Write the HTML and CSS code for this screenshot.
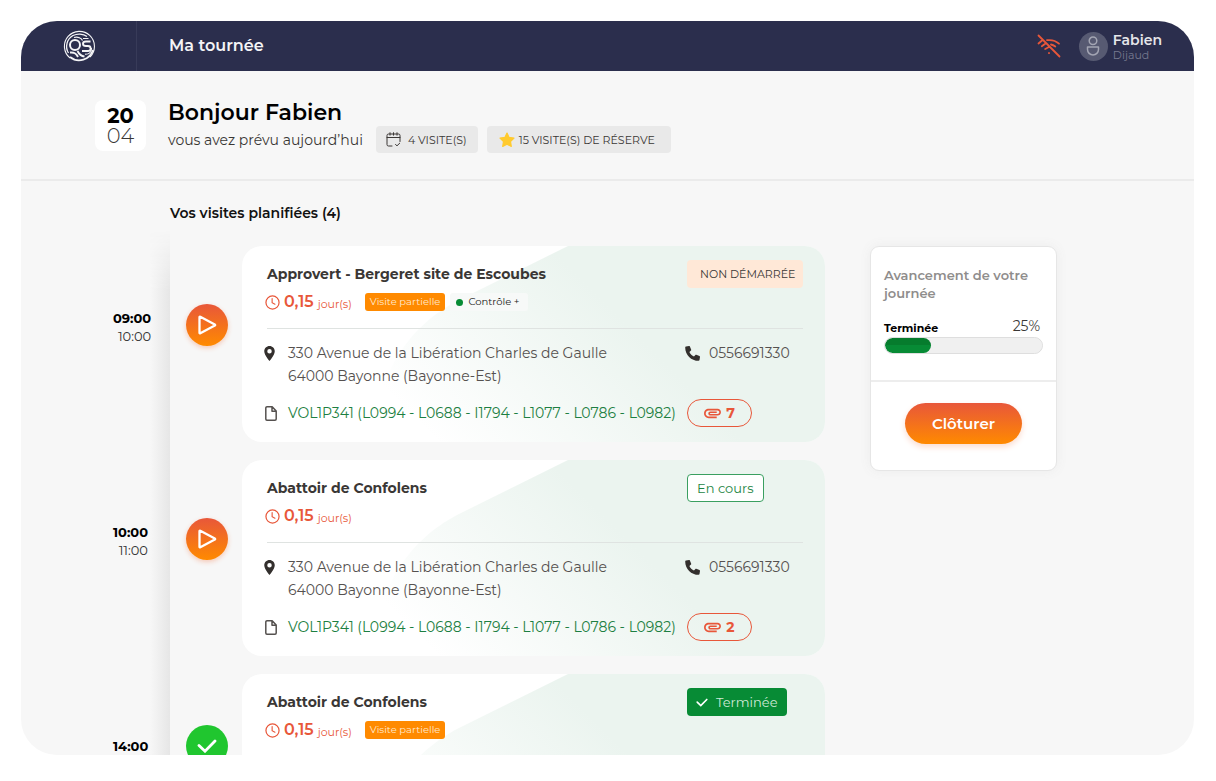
FILE: index.html
```html
<!DOCTYPE html>
<html lang="fr">
<head>
<meta charset="utf-8">
<meta name="viewport" content="width=device-width, initial-scale=1">
<title>Ma tournée</title>
<link rel="stylesheet" href="styles.css">
</head>
<body>
<svg class="sprite" aria-hidden="true">
  <symbol id="i-clock" viewBox="0 0 16 16"><circle cx="8" cy="8" r="7" fill="none" stroke="currentColor" stroke-width="1.3"/><path d="M7.6 3.8v4.4l3 1.6" fill="none" stroke="currentColor" stroke-width="1.2" stroke-linecap="round"/></symbol>
  <symbol id="i-pin" viewBox="5 2 14 20"><path fill="currentColor" d="M12 2C8.13 2 5 5.13 5 9c0 5.25 7 13 7 13s7-7.75 7-13c0-3.87-3.13-7-7-7zm0 10a3 3 0 1 1 0-6 3 3 0 0 1 0 6z"/></symbol>
  <symbol id="i-phone" viewBox="0 0 15 15"><path fill="currentColor" d="M1 .5L4 0c.4 0 .7.100.9.500l1.300 3.200c.100.300 0 .700-.2.900L4.400 6c.9 1.900 2.600 3.700 4.600 4.600l1.400-1.600c.2-.300.600-.300.900-.2l3.200 1.300c.400.200.500.500.5.900l-.5 3c-.1.500-.4.800-.9.800C6.300 14.800.2 9 .2 1.400c0-.5.300-.8.800-.9z"/></symbol>
  <symbol id="i-file" viewBox="0 0 12 15"><path d="M2 .8h5.200l4 4.200v8a1.200 1.200 0 0 1-1.200 1.200H2A1.200 1.200 0 0 1 .8 13V2A1.200 1.200 0 0 1 2 .8zM7 1v4.200h4" fill="none" stroke="currentColor" stroke-width="1.5" stroke-linejoin="round"/></symbol>
  <symbol id="i-clip" viewBox="2 6 20 13"><path fill="currentColor" d="M2 12.500C2 9.460 4.460 7 7.500 7H18c2.210 0 4 1.790 4 4s-1.790 4-4 4H9.500C8.120 15 7 13.880 7 12.500S8.120 10 9.500 10H17v2H9.410c-.55 0-.55 1 0 1H18c1.100 0 2-.9 2-2s-.9-2-2-2H7.500C5.570 9 4 10.570 4 12.500S5.570 16 7.500 16H17v2H7.500C4.460 18 2 15.540 2 12.500z"/></symbol>
  <symbol id="i-play" viewBox="0 0 20 20"><path d="M2.500 2.200v15.600c0 .5.400.7.800.5l14.500-7.700c.5-.3.500-.9 0-1.200L3.300 1.700c-.4-.2-.8 0-.8.5z" fill="none" stroke="currentColor" stroke-width="2.300" stroke-linejoin="round"/></symbol>
  <symbol id="i-check" viewBox="0 0 20 14"><path d="M2 6.500l6 5.700L18 2" fill="none" stroke="currentColor" stroke-width="2.800" stroke-linecap="round"/></symbol>
  <symbol id="i-shape" viewBox="0 0 583 196" preserveAspectRatio="xMinYMin slice"><path fill="url(#g-shape)" d="M326 0L217 54C176 75 136 116 130 196H583V0z"/></symbol>
  <defs>
    <linearGradient id="g-shape" gradientUnits="userSpaceOnUse" x1="200" y1="200" x2="380" y2="20"><stop offset="0" stop-color="#ebf4ef" stop-opacity="0"/><stop offset=".85" stop-color="#ebf4ef"/></linearGradient>
  </defs>
</svg>

<div class="app">
  <header class="topbar">
    <a class="logo" href="#" aria-label="Accueil">
      <svg width="32" height="32" viewBox="0 0 32 32" fill="none" stroke="currentColor">
        <path d="M7 28A15 15 0 1 1 27 27" stroke-width="1.100"/>
        <path d="M7 27A14.500 14.500 0 0 0 30 20" stroke-width="1.800"/>
        <path d="M5.500 23A12.500 12.500 0 0 1 10 5.500C14 3.500 20 3.300 24 6.500" stroke-width="1.300"/>
        <circle cx="12" cy="15" r="5" stroke-width="2"/>
        <path d="M11 7.500c4-1 7.500.6 8.500 3" stroke-width="1.200"/>
        <path d="M7 22.500c5-.5 6.500 1.500 8 4.500M14.500 21c1.500 3 3 5 7 5.500" stroke-width="1.900"/>
        <path d="M27.500 11.500h-4.500c-4 0-4 4.500 0 4.500h2c3.500 0 3.500 5 0 5h-6" stroke-width="1.900"/>
        <path d="M20 8.500h5.500M22 24.200c4 .3 6.500-1.700 6.500-6.200" stroke-width="1.200"/>
      </svg>
    </a>
    <h1 class="topbar-title">Ma tournée</h1>
    <svg class="offline" width="24" height="24" viewBox="0 0 24 24" fill="none" stroke="currentColor" stroke-width="1.800" stroke-linecap="round" role="img" aria-label="Hors ligne">
      <path d="M1.500 1.500l21 21M1.500 9.500L5 6.500M10 6.200c4.500-.6 9 .7 12 3.500M4.800 12.200L8.500 9.500M14 10.500c1.600.3 3 1 4.300 2M8.200 15l3.300-1.800M12 19v.2"/>
    </svg>
    <div class="user">
      <span class="avatar">
        <svg width="14" height="20" viewBox="0 0 14 20" fill="none" stroke="currentColor" stroke-width="1.500"><circle cx="7" cy="4.800" r="3.800"/><path d="M1.500 11h11v2.500a5.500 5.500 0 0 1-11 0z" stroke-linejoin="round"/></svg>
      </span>
      <span class="user-name"><strong>Fabien</strong><span>Dijaud</span></span>
    </div>
  </header>

  <section class="welcome">
    <time class="date" datetime="04-20"><strong>20</strong><span>04</span></time>
    <div>
      <h2 class="hello">Bonjour Fabien</h2>
      <div class="summary">
        <p>vous avez prévu aujourd’hui</p>
        <span class="chip">
          <svg width="15" height="15" viewBox="0 0 15 15" fill="none" stroke="currentColor" stroke-linecap="round"><path d="M6 14H2.500A1.500 1.500 0 0 1 1 12.500v-9A1.500 1.500 0 0 1 2.500 2h10A1.500 1.500 0 0 1 14 3.500v6M1 5.500h13M4 .7v2.500M7.500.7v2.500M11 .7v2.500M9.500 12.500l1.500 1.300 2.700-2.600"/></svg>
          4 VISITE(S)
        </span>
        <span class="chip chip-star">
          <svg width="16" height="16" viewBox="0 0 16 16"><path fill="#ffca2e" stroke="#ffca2e" stroke-width="1.200" stroke-linejoin="round" d="M8 1l2.100 4.400 4.900.7-3.500 3.400.8 4.900L8 12.100l-4.300 2.300.8-4.900L1 6.100l4.900-.7z"/></svg>
          15 VISITE(S) DE RÉSERVE
        </span>
      </div>
    </div>
  </section>

  <main class="content">
    <h2 class="section-title">Vos visites planifiées (4)</h2>
    <div class="columns">
      <ol class="visits">
        <li class="visit">
          <div class="hours"><strong>09:00</strong><span>10:00</span></div>
          <button class="round" type="button" aria-label="Démarrer"><svg width="20" height="20"><use href="#i-play"/></svg></button>
          <article class="card">
            <svg class="card-shape" aria-hidden="true"><use href="#i-shape"/></svg>
            <div class="card-head">
              <div>
                <h3>Approvert - Bergeret site de Escoubes</h3>
                <div class="meta"><svg width="15" height="15"><use href="#i-clock"/></svg><strong>0,15</strong><span class="unit">jour(s)</span><span class="tag">Visite partielle</span><span class="tag tag-control">Contrôle +</span></div>
              </div>
              <div class="side"><span class="status status-new">NON DÉMARRÉE</span></div>
            </div>
            <div class="card-body">
              <svg class="pin" width="11" height="15"><use href="#i-pin"/></svg>
              <address>330 Avenue de la Libération Charles de Gaulle<br>64000 Bayonne (Bayonne-Est)</address>
              <a class="phone" href="tel:0556691330"><svg width="15" height="15"><use href="#i-phone"/></svg>0556691330</a>
              <svg class="file" width="12" height="15"><use href="#i-file"/></svg>
              <a class="codes" href="#">VOL1P341 (L0994 - L0688 - I1794 - L1077 - L0786 - L0982)</a>
              <button class="clip" type="button" aria-label="7 pièces jointes"><svg width="17" height="11"><use href="#i-clip"/></svg>7</button>
            </div>
          </article>
        </li>
        <li class="visit">
          <div class="hours"><strong>10:00</strong><span>11:00</span></div>
          <button class="round" type="button" aria-label="Démarrer"><svg width="20" height="20"><use href="#i-play"/></svg></button>
          <article class="card">
            <svg class="card-shape" aria-hidden="true"><use href="#i-shape"/></svg>
            <div class="card-head">
              <div>
                <h3>Abattoir de Confolens</h3>
                <div class="meta"><svg width="15" height="15"><use href="#i-clock"/></svg><strong>0,15</strong><span class="unit">jour(s)</span></div>
              </div>
              <div class="side"><span class="status status-open">En cours</span></div>
            </div>
            <div class="card-body">
              <svg class="pin" width="11" height="15"><use href="#i-pin"/></svg>
              <address>330 Avenue de la Libération Charles de Gaulle<br>64000 Bayonne (Bayonne-Est)</address>
              <a class="phone" href="tel:0556691330"><svg width="15" height="15"><use href="#i-phone"/></svg>0556691330</a>
              <svg class="file" width="12" height="15"><use href="#i-file"/></svg>
              <a class="codes" href="#">VOL1P341 (L0994 - L0688 - I1794 - L1077 - L0786 - L0982)</a>
              <button class="clip" type="button" aria-label="2 pièces jointes"><svg width="17" height="11"><use href="#i-clip"/></svg>2</button>
            </div>
          </article>
        </li>
        <li class="visit">
          <div class="hours"><strong>14:00</strong></div>
          <button class="round round-done" type="button" aria-label="Visite terminée"><svg width="20" height="14"><use href="#i-check"/></svg></button>
          <article class="card">
            <svg class="card-shape" aria-hidden="true"><use href="#i-shape"/></svg>
            <div class="card-head">
              <div>
                <h3>Abattoir de Confolens</h3>
                <div class="meta"><svg width="15" height="15"><use href="#i-clock"/></svg><strong>0,15</strong><span class="unit">jour(s)</span><span class="tag">Visite partielle</span></div>
              </div>
              <div class="side"><span class="status status-done"><svg width="12" height="9"><use href="#i-check"/></svg>Terminée</span></div>
            </div>
          </article>
        </li>
      </ol>

      <aside class="progress-card">
        <div class="progress-part">
          <h2>Avancement de votre journée</h2>
          <div class="progress-label"><label for="done">Terminée</label><span>25%</span></div>
          <progress id="done" value="29" max="100"></progress>
        </div>
        <div class="close-part"><button class="close-day" type="button">Clôturer</button></div>
      </aside>
    </div>
  </main>
</div>
</body>
</html>
```
FILE: styles.css
```css
* { box-sizing: border-box; }

body {
  margin: 0;
  padding: 21px 22px 26px 21px;
  background: #fff;
  color: #3a3735;
  font: 14px/18px Montserrat, Inter, sans-serif;
}

h1, h2, h3, p, ol { margin: 0; padding: 0; }
ol { list-style: none; }
button { font: inherit; border: 0; padding: 0; cursor: pointer; }
a { color: inherit; text-decoration: none; }
svg { display: block; flex: none; }
.sprite { position: absolute; width: 0; height: 0; }

.app {
  height: calc(100vh - 47px);
  overflow: hidden;
  border-radius: 36px;
  background: #f7f7f7;
}

/* Top bar */
.topbar {
  display: flex;
  align-items: center;
  height: 50px;
  padding-right: 32px;
  background: #2b2e4d;
  color: #f4f4f6;
}
.logo {
  display: flex;
  align-items: center;
  justify-content: center;
  width: 116px;
  height: 100%;
  border-right: 1px solid #383b59;
}
.topbar-title { flex: 1; padding-left: 32px; font-size: 16px; font-weight: 600; }
.offline { margin-right: 18px; color: #e8573a; }
.user { display: flex; align-items: center; gap: 5px; }
.avatar {
  display: grid;
  place-items: center;
  width: 29px;
  height: 29px;
  border-radius: 50%;
  background: #575a72;
  color: #a3a5b3;
}
.user-name { display: flex; flex-direction: column; padding-top: 3px; font-size: 11px; line-height: 15px; color: #777a90; }
.user-name strong { font-size: 14px; font-weight: 600; color: #e6e6ea; }

/* Greeting */
.welcome {
  display: flex;
  gap: 22px;
  padding: 29px 74px 26px;
  border-bottom: 2px solid #ebebeb;
}
.date {
  display: flex;
  flex-direction: column;
  align-items: center;
  width: 51px;
  height: 51px;
  padding-top: 6px;
  border-radius: 8px;
  background: #fff;
  font-size: 21px;
  line-height: 20px;
}
.date strong { color: #000; font-weight: 700; }
.date span { font-weight: 300; }
.hello { font-size: 22px; line-height: 26px; font-weight: 600; color: #000; }
.summary { display: flex; align-items: center; }
.chip {
  display: flex;
  align-items: center;
  gap: 7px;
  height: 27px;
  margin-left: 13px;
  padding: 0 11px 0 10px;
  border-radius: 4px;
  background: #e9e9e9;
  font-size: 11px;
}
.chip-star { gap: 4px; margin-left: 9px; padding: 0 16px 0 12px; }

/* Visits */
.content { padding-top: 22px; }
.section-title { padding-left: 149px; font-size: 14px; line-height: 20px; font-weight: 600; color: #111; }
.columns {
  display: grid;
  grid-template-columns: minmax(0, 804px) 187px;
  align-items: start;
  gap: 45px;
  margin-top: 23px;
}
.visits { position: relative; display: grid; gap: 18px; }
.visits::before {
  content: "";
  position: absolute;
  top: -16px;
  bottom: 0;
  left: 129px;
  width: 20px;
  background: linear-gradient(to right, #f7f7f7, #e6e6e6);
  -webkit-mask-image: linear-gradient(transparent, #000 60px);
  mask-image: linear-gradient(transparent, #000 60px);
}
.visit { display: grid; grid-template-columns: 59px 42px minmax(0, 1fr); column-gap: 14px; padding-left: 92px; }
.hours {
  position: relative;
  display: flex;
  flex-direction: column;
  justify-self: start;
  padding-top: 63px;
  text-align: right;
  font-size: 13px;
  color: #000;
}
.hours span { font-weight: 400; color: #333; }
.round {
  display: grid;
  place-items: center;
  width: 42px;
  height: 42px;
  margin-top: 58px;
  border-radius: 50%;
  background: linear-gradient(#e8573a, #ff8a00);
  box-shadow: 0 2px 5px #f5c9b8;
  color: #fff;
}
.round-done { margin-top: 51px; background: #20c62f; box-shadow: none; }

.card {
  position: relative;
  height: max-content;
  min-height: 196px;
  padding: 14px 22px 14px 25px;
  border-radius: 20px;
  overflow: hidden;
  background: #fff;
}
.card > * { position: relative; }
.card .card-shape { position: absolute; inset: 0; width: 100%; height: 100%; }
.card-head {
  display: grid;
  grid-template-columns: minmax(0, 1fr) 116px;
  height: 69px;
  border-bottom: 1px solid #dfe3e1;
}
.card h3 { padding-top: 5px; font-size: 14px; font-weight: 700; }
.meta { display: flex; align-items: center; height: 20px; margin: 9px 0 0 -2px; color: #e8573a; }
.meta strong { margin: 0 4px; font-size: 16px; font-weight: 600; }
.unit { margin-right: 13px; padding-top: 3px; font-size: 11px; }
.tag {
  height: 18px;
  padding: 0 5px;
  border-radius: 3px;
  background: #ff8a00;
  color: #ffe9cf;
  font-size: 10px;
}
.tag-control {
  display: flex;
  align-items: center;
  gap: 5px;
  margin-left: 5px;
  padding: 0 8px 0 6px;
  background: #f7f9f8;
  color: #222;
}
.tag-control::before { content: ""; width: 7px; height: 7px; border-radius: 50%; background: #078b35; }
.side { display: flex; align-items: flex-start; }
.status {
  display: flex;
  align-items: center;
  height: 28px;
  border-radius: 4px;
  padding: 0 9px;
  font-size: 13px;
  white-space: nowrap;
}
.status-new { width: 100%; padding: 0 0 0 13px; background: #ffe8d7; font-size: 11px; }
.status-open { border: 1px solid #3a9f60; background: #fff; color: #1d8544; }
.status-done { gap: 8px; background: #078b35; color: #cfe9d7; }
.status-done svg { color: #fff; }

.card-body {
  display: grid;
  grid-template-columns: 21px minmax(0, 1fr) 116px;
  align-items: start;
  padding-top: 13px;
  row-gap: 11px;
  color: #55514f;
}
address { font-style: normal; line-height: 23px; }
.pin { margin: 4px 0 0 -3px; color: #332f2d; }
.phone { display: flex; align-items: center; gap: 9px; margin-left: -2px; line-height: 23px; }
.phone svg { color: #332f2d; }
.file { align-self: center; margin-left: -2px; }
.codes { align-self: center; color: #1d7f42; white-space: nowrap; }
.clip {
  display: flex;
  align-items: center;
  justify-content: center;
  gap: 5px;
  width: 65px;
  height: 28px;
  border: 1px solid #e8573a;
  border-radius: 14px;
  background: none;
  color: #e8573a;
  font-weight: 700;
}

/* Day progress */
.progress-card {
  border: 1px solid #e6e6e6;
  border-radius: 9px;
  background: #fff;
  box-shadow: 0 0 12px #ececec;
}
.progress-part { padding: 19px 13px 26px; border-bottom: 2px solid #ededed; }
.progress-part h2 { font-size: 13px; font-weight: 600; color: #8f8d8c; }
.progress-label { display: flex; justify-content: space-between; margin-top: 15px; padding-right: 3px; }
.progress-label label { padding-top: 2px; font-size: 11px; font-weight: 700; color: #000; }
progress {
  display: block;
  appearance: none;
  width: 100%;
  height: 17px;
  border: 1px solid #dedede;
  border-radius: 9px;
  overflow: hidden;
  background: #f0f0f0;
}
progress::-webkit-progress-bar { background: #f0f0f0; border-radius: 8px; }
progress::-webkit-progress-value { background: linear-gradient(#067c2d 45%, #078b35 45%); border-radius: 8px; }
.close-part { display: flex; justify-content: center; padding: 21px 0 26px; }
.close-day {
  width: 117px;
  height: 41px;
  border-radius: 21px;
  background: linear-gradient(#e8573a, #ff8a00);
  box-shadow: 0 3px 6px #fbdcd0;
  color: #fff;
  font-size: 15px;
  font-weight: 600;
}
```
